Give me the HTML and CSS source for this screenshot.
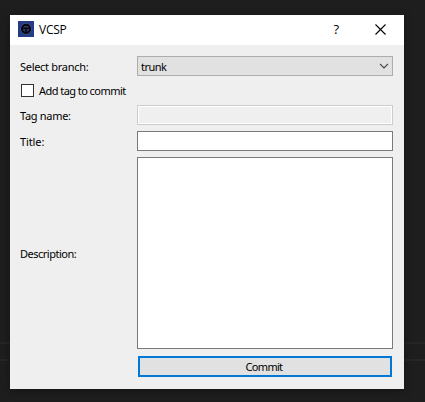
FILE: index.html
```html
<!DOCTYPE html>
<html lang="en">
<head>
<meta charset="utf-8">
<title>VCSP</title>
<link rel="stylesheet" href="styles.css">
</head>
<body>
<main class="dialog">
  <header class="titlebar">
    <svg class="logo" width="16" height="16" viewBox="0 0 16 16">
      <rect width="16" height="16" fill="#253b87"/>
      <circle cx="8" cy="7.8" r="5.8" fill="#465280"/>
      <circle cx="8" cy="7.8" r="4.1" fill="#303b68" stroke="#05060f" stroke-width="2"/>
      <path d="M4 7.2h8M8 7v4" stroke="#05060f" stroke-width="1.6"/>
    </svg>
    <span class="caption">VCSP</span>
    <span class="help">?</span>
    <svg class="close" width="11" height="11" viewBox="0 0 11 11"><path d="M.5.5l10 10M10.500.5l-10 10" stroke="#000" stroke-width="1.1"/></svg>
  </header>
  <form class="form">
    <label class="label branch">Select branch:</label>
    <div class="combo"><span class="trunk">trunk</span>
      <svg width="10" height="6" viewBox="0 0 10 6"><path d="M1 .8l4 4 4-4" fill="none" stroke="#444" stroke-width="1.2"/></svg>
    </div>
    <label class="check"><span class="box"></span><span class="tagtext">Add tag to commit</span></label>
    <label class="label tagname">Tag name:</label>
    <div class="field disabled"></div>
    <label class="label title">Title:</label>
    <div class="field"></div>
    <label class="label description">Description:</label>
    <div class="field"></div>
    <button class="commit" type="button"><span>Commit</span></button>
  </form>
</main>
</body>
</html>
```
FILE: styles.css
```css
* { box-sizing: border-box; }
body {
  margin: 0;
  height: 402px;
  padding: 15px 21px 13px 10px;
  overflow: hidden;
  background: linear-gradient(transparent 342px, #262626 342px, #262626 344px, transparent 344px, transparent 359px, #262626 359px, #262626 361px, transparent 361px) #1e1e1e;
  font: 11px/14px "Noto Sans", sans-serif;
  color: #000;
}
.dialog {
  width: 394px;
  height: 374px;
  background: #efefef;
  box-shadow: 0 2px 9px rgba(0, 0, 0, .35);
}
.titlebar {
  height: 30px;
  padding: 0 18px 0 8px;
  display: flex;
  align-items: center;
  background: #fff;
}
.logo { margin-top: -2px; }
.caption { margin-left: 5px; font: 12px/16px "Open Sans", sans-serif; letter-spacing: -.25px; }
.help { margin-left: auto; margin-right: 36px; margin-top: -2px; font: 500 13px/16px "Open Sans", sans-serif; }
.close { margin-top: -2px; }
.form {
  display: grid;
  grid-template-columns: 117px 256px;
  grid-template-rows: 20px 17px 20px 20px 192px 23px;
  row-gap: 6px;
  padding: 11px 11px 11px 10px;
}
.label { align-self: center; padding-top: 2px; white-space: nowrap; }
.branch { letter-spacing: -.3px; }
.tagname { letter-spacing: -.3px; }
.title { letter-spacing: -.1px; }
.description { letter-spacing: -.5px; }
.combo {
  display: flex;
  align-items: center;
  justify-content: space-between;
  padding: 0 3px;
  border: 1px solid #adadad;
  background: #e1e1e1;
}
.trunk { padding-top: 2px; letter-spacing: -.5px; }
.check {
  grid-column: 1 / 3;
  display: flex;
  align-items: center;
  gap: 5px;
  padding-left: 1px;
  letter-spacing: -.55px;
}
.box { width: 13px; height: 13px; border: 1px solid #333; background: #fff; }
.field { border: 1px solid #7a7a7a; background: #fff; }
.disabled { border-color: #ccc; background: #efefef; box-shadow: inset 0 0 0 1px #fff; }
.commit {
  grid-column: 2;
  margin: 1px;
  padding: 0 2px 0 0;
  border: 2px solid #0078d7;
  background: #e1e1e1;
  color: #000;
  font: inherit;
  letter-spacing: -.7px;
}
```
